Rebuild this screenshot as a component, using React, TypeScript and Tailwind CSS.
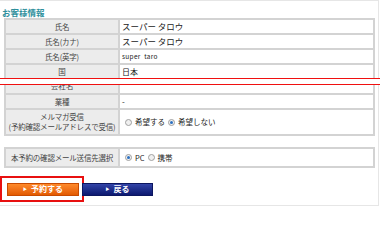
const jp = { fontFamily: '"Noto Sans CJK JP", "Liberation Sans", sans-serif' }

const Radio = ({ on }: { on?: boolean }) => (
  <span className="inline-flex h-[7px] w-[7px] shrink-0 items-center justify-center rounded-full border border-[#a0a0a0] bg-[#f0f0f0]">
    {on && <span className="h-[3px] w-[3px] rounded-full bg-[#2a6fc0]" />}
  </span>
)

// box-sizing is border-box, so row heights include the 2px divider
const Row = ({
  label,
  children,
  h = 'h-[15px]',
  last,
  vcls = 'text-[8px]',
}: {
  label: React.ReactNode
  children?: React.ReactNode
  h?: string
  last?: boolean
  vcls?: string
}) => (
  <div className={`flex ${h} ${last ? '' : 'border-b-2 border-[#d3d3d3]'}`}>
    <div className="flex w-[114px] shrink-0 items-center justify-center border-r-2 border-[#d3d3d3] bg-[#ececec] text-center text-[7.5px] leading-[10px] tracking-[-0.2px] text-[#444]">
      {label}
    </div>
    <div className={`flex flex-1 items-center pl-[2px] text-[#222] ${vcls}`}>{children}</div>
  </div>
)

export default function App() {
  return (
    <div className="h-[206px] w-[380px] overflow-hidden bg-white" style={jp}>
      <div className="h-[206px] w-[379px] border-r border-b border-t border-[#e6e6e6]">
        <div className="pl-[2px] pt-[6px] text-[8.5px] font-bold leading-[10px] text-[#2f8f9c]">お客様情報</div>
        <div className="ml-[4px] mt-[1px] w-[371px] border-x-2 border-t-2 border-[#d3d3d3]">
          <Row label="氏名" vcls="text-[8.5px]">スーパー タロウ</Row>
          <Row label="氏名(カナ)" vcls="text-[8.5px]">スーパー タロウ</Row>
          <Row label="氏名(英字)" vcls="text-[6.5px] tracking-[0.3px]">super&nbsp;&nbsp;taro</Row>
          <Row label="国" h="h-[13px]" vcls="text-[8px]" last>
            日本
          </Row>
        </div>
        <div className="-ml-[1px] h-[7px] w-[382px] border-y border-[#f01010] bg-white" />
        <div className="ml-[4px] w-[371px] border-x-2 border-b-2 border-[#d3d3d3]">
          <div className="flex h-[10px] border-b-2 border-[#d3d3d3]">
            <div className="w-[114px] shrink-0 overflow-hidden border-r-2 border-[#d3d3d3] bg-[#ececec] text-center text-[7.5px] leading-[9px] text-[#444]">
              <div className="-mt-[4px]">会社名</div>
            </div>
            <div className="flex-1" />
          </div>
          <Row label="業種">-</Row>
          <Row
            label={
              <span>
                メルマガ受信
                <br />
                (予約確認メールアドレスで受信)
              </span>
            }
            h="h-[24px]"
            vcls="text-[7.5px]"
            last
          >
            <span className="flex items-center gap-[3px] pl-[3px]">
              <Radio />
              <span>希望する</span>
              <Radio on />
              <span>希望しない</span>
            </span>
          </Row>
        </div>
        <div className="ml-[4px] mt-[11px] w-[371px] border-2 border-[#d3d3d3]">
          <Row label="本予約の確認メール送信先選択" h="h-[17px]" vcls="text-[7.5px]" last>
            <span className="flex items-center gap-[3px] pl-[3px]">
              <Radio on />
              <span>PC</span>
              <Radio />
              <span>携帯</span>
            </span>
          </Row>
        </div>
        <div className="mt-[8px] flex items-center">
          <div className="flex h-[26px] w-[84px] items-center border-2 border-[#e81010] pl-[5px]">
            <button className="flex h-[13px] w-[72px] items-center justify-center gap-[4px] border border-[#c84a00] bg-gradient-to-b from-[#ff8a2a] to-[#e25a00] text-[8px] font-bold leading-none text-white">
              <span className="text-[4px]">▶</span>予約する
            </button>
          </div>
          <button className="-ml-[2px] flex h-[13px] w-[71px] items-center justify-center gap-[4px] border border-[#0c1660] bg-gradient-to-b from-[#3344a8] to-[#0d1870] text-[8px] font-bold leading-none text-white">
            <span className="text-[4px]">▶</span>戻る
          </button>
        </div>
      </div>
    </div>
  )
}
